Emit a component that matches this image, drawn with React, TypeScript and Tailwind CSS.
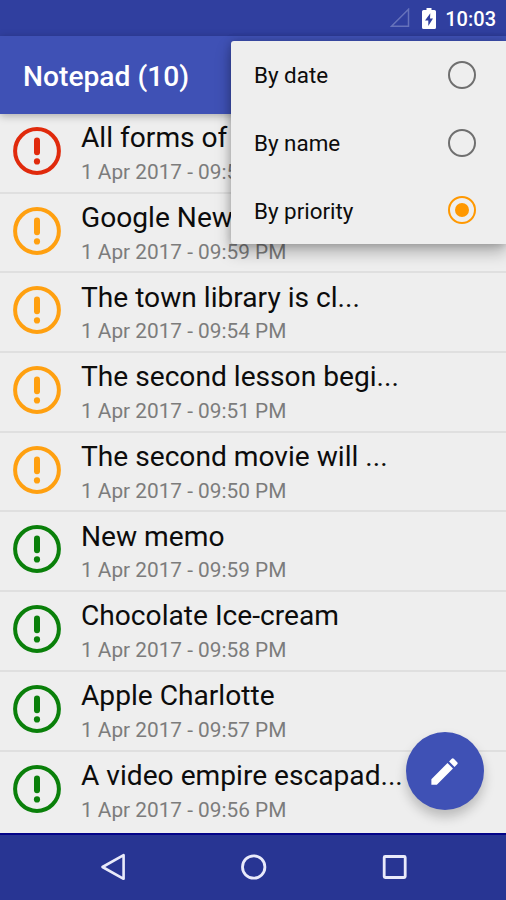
import { useState } from "react";

interface Note {
    idNote: number;
    title: string;
    date: string;
    priority: "high" | "medium" | "low";
}

const notes: Note[] = [
    { idNote: 1, title: "All forms of", date: "1 Apr 2017 - 09:55 PM", priority: "high" },
    { idNote: 2, title: "Google News", date: "1 Apr 2017 - 09:59 PM", priority: "medium" },
    { idNote: 3, title: "The town library is cl...", date: "1 Apr 2017 - 09:54 PM", priority: "medium" },
    { idNote: 4, title: "The second lesson begi...", date: "1 Apr 2017 - 09:51 PM", priority: "medium" },
    { idNote: 5, title: "The second movie will ...", date: "1 Apr 2017 - 09:50 PM", priority: "medium" },
    { idNote: 6, title: "New memo", date: "1 Apr 2017 - 09:59 PM", priority: "low" },
    { idNote: 7, title: "Chocolate Ice-cream", date: "1 Apr 2017 - 09:58 PM", priority: "low" },
    { idNote: 8, title: "Apple Charlotte", date: "1 Apr 2017 - 09:57 PM", priority: "low" },
    { idNote: 9, title: "A video empire escapad...", date: "1 Apr 2017 - 09:56 PM", priority: "low" },
];

const priorityColors = {
    high: "text-[#e02a0c]",
    medium: "text-[#ffa010]",
    low: "text-[#0a800a]",
};

const sortOptions = [
    { value: "date", label: "By date" },
    { value: "name", label: "By name" },
    { value: "priority", label: "By priority" },
];

function StatusBar() {
    return (
        <div className="flex h-9 shrink-0 items-center justify-end bg-[#303f9f] pr-[10px] text-white">
            <svg className="h-5 w-5" viewBox="0 0 20 20" fill="none">
                <path d="M1.5 18.3L18.5 1.3V18.3Z" stroke="#6672bb" strokeWidth="1.5" />
            </svg>
            <svg className="ml-[12px] h-[21px] w-[14px]" viewBox="0 0 14 21">
                <path d="M4.5 0h5v2H12.4Q14 2 14 3.6V19.4Q14 21 12.4 21H1.6Q0 21 0 19.4V3.6Q0 2 1.6 2H4.5Z" fill="#fff" />
                <path d="M8.3 5.2L3 12.6H6.3V18L11 10.4H8Z" fill="#303f9f" />
            </svg>
            <span className="ml-[9px] pt-[2px] text-[20px] leading-[34px] font-medium">10:03</span>
        </div>
    );
}

function PriorityIcon({ priority }: { priority: Note["priority"] }) {
    return (
        <svg className={`h-12 w-12 shrink-0 ${priorityColors[priority]}`} viewBox="0 0 48 48" fill="none">
            <circle cx="24" cy="24" r="21.9" stroke="currentColor" strokeWidth="4" />
            <path d="M24 13.4V25.2" stroke="currentColor" strokeWidth="6" strokeLinecap="round" />
            <circle cx="24" cy="34.4" r="3.1" fill="currentColor" />
        </svg>
    );
}

function NoteRow({ note }: { note: Note }) {
    return (
        <div className="flex h-[79.7px] shrink-0 border-b-2 border-[#dfdfdf] pt-[13px] pl-[13px] last:border-b-0">
            <PriorityIcon priority={note.priority} />
            <div className="-mt-[5.75px] ml-5 whitespace-nowrap">
                <h3 className="text-[28.15px] leading-[34px] text-[#0c0c0c]">{note.title}</h3>
                <p className="-mt-[0.25px] text-[20.8px] leading-[34px] text-[#7c7c7c]">{note.date}</p>
            </div>
        </div>
    );
}

function SortMenu() {
    const [selected, setSelected] = useState("priority");

    return (
        <div className="absolute top-[41px] right-0 z-20 flex h-[203px] w-[275px] flex-col rounded-l-[3px] bg-[#eeeeee] shadow-[0_8px_16px_rgba(0,0,0,0.28),0_0_8px_rgba(0,0,0,0.2)]">
            {sortOptions.map((option) => (
                <button
                    key={option.value}
                    className="flex flex-1 items-center justify-between pr-[30px] pl-[23px]"
                    onClick={() => setSelected(option.value)}
                >
                    <span className="pt-[1px] text-[22.4px] leading-7 text-[#0c0c0c]">{option.label}</span>
                    <span className={`flex h-[28px] w-[28px] items-center justify-center rounded-full border-[2.5px] ${selected === option.value ? "border-[#ff9800]" : "border-[#6f6f6f]"}`}>
                        {selected === option.value && <span className="h-[14px] w-[14px] rounded-full bg-[#ff9800]" />}
                    </span>
                </button>
            ))}
        </div>
    );
}

function NavBar() {
    return (
        <div className="relative z-10 flex h-[67px] shrink-0 items-center border-t-2 border-[#040488] bg-[#283593] pb-[2px]">
            <svg className="ml-[101px] h-7 w-6" viewBox="0 0 24 28" fill="none">
                <path d="M1.5 14L22.6 2.2V25.8Z" stroke="#e9eafa" strokeWidth="2.6" strokeLinejoin="round" />
            </svg>
            <svg className="ml-[115px] h-7 w-7" viewBox="0 0 28 28" fill="none">
                <circle cx="13.7" cy="14" r="11.2" stroke="#e9eafa" strokeWidth="2.8" />
            </svg>
            <svg className="ml-[113px] h-7 w-7" viewBox="0 0 28 28" fill="none">
                <rect x="3.2" y="3.5" width="21" height="21" rx="1" stroke="#e9eafa" strokeWidth="2.8" />
            </svg>
        </div>
    );
}

export default function App() {
    return (
        <div className="relative flex h-[900px] w-[506px] flex-col overflow-hidden bg-[#eeeeee] font-[Roboto,sans-serif]">
            <StatusBar />
            <header className="relative z-10 flex h-[78px] shrink-0 items-center bg-[#3f51b5] pt-[4px] pl-[23px] shadow-[0_2px_8px_rgba(0,0,0,0.28)]">
                <h1 className="text-[28.2px] leading-9 font-medium text-white">Notepad (10)</h1>
            </header>

            <main className="min-h-0 flex-1 overflow-hidden">
                {notes.map((note) => (
                    <NoteRow key={note.idNote} note={note} />
                ))}
            </main>

            <NavBar />
            <SortMenu />

            {/* new note */}
            <button className="absolute right-[22px] bottom-[90px] flex h-[78px] w-[78px] items-center justify-center rounded-full bg-[#3f51b5] pr-px shadow-[0_7px_12px_rgba(0,0,0,0.22)]">
                <svg className="h-[35px] w-[35px]" viewBox="0 0 24 24" fill="#fff">
                    <path d="M3 17.25V21h3.75L17.81 9.94l-3.75-3.75L3 17.25zM20.71 7.04a1 1 0 0 0 0-1.41l-2.34-2.34a1 1 0 0 0-1.41 0l-1.83 1.83 3.75 3.75 1.83-1.83z" />
                </svg>
            </button>
        </div>
    );
}
